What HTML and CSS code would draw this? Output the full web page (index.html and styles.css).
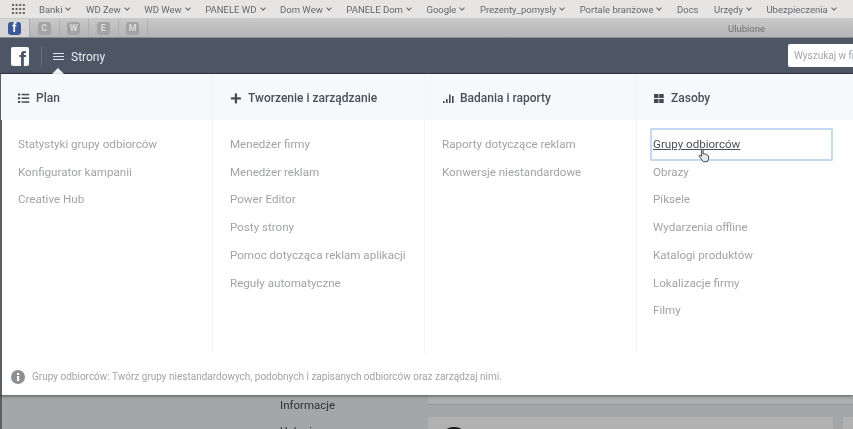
FILE: index.html
```html
<!DOCTYPE html>
<html lang="en">
<head>
  <meta charset="UTF-8" />
  <title>Grupy odbiorców</title>
  <link rel="stylesheet" href="styles.css">
</head>
<body>

  <!-- Browser bookmarks -->
  <div class="bookmarks">
    <svg class="apps" width="13" height="10" viewBox="0 0 13 10" fill="#666">
      <rect x="0" y="0" width="2" height="2"/><rect x="3.6" y="0" width="2" height="2"/><rect x="7.2" y="0" width="2" height="2"/><rect x="10.8" y="0" width="2" height="2"/>
      <rect x="0" y="4" width="2" height="2"/><rect x="3.6" y="4" width="2" height="2"/><rect x="7.2" y="4" width="2" height="2"/><rect x="10.8" y="4" width="2" height="2"/>
      <rect x="0" y="8" width="2" height="2"/><rect x="3.6" y="8" width="2" height="2"/><rect x="7.2" y="8" width="2" height="2"/><rect x="10.8" y="8" width="2" height="2"/>
    </svg>
    <span class="mark">Banki <i></i></span>
    <span class="mark">WD Zew <i></i></span>
    <span class="mark">WD Wew <i></i></span>
    <span class="mark">PANELE WD <i></i></span>
    <span class="mark">Dom Wew <i></i></span>
    <span class="mark">PANELE Dom <i></i></span>
    <span class="mark">Google <i></i></span>
    <span class="mark">Prezenty_pomysly <i></i></span>
    <span class="mark">Portale branżowe <i></i></span>
    <span class="mark">Docs</span>
    <span class="mark">Urzędy <i></i></span>
    <span class="mark">Ubezpieczenia <i></i></span>
  </div>

  <!-- Favourites tabs -->
  <div class="favs">
    <span class="fav fav-fb"><b class="tile tile-fb">f</b></span>
    <span class="fav"><b class="tile">C</b></span>
    <span class="fav"><b class="tile">W</b></span>
    <span class="fav"><b class="tile">E</b></span>
    <span class="fav"><b class="tile">M</b></span>
    <span class="favs-title">Ulubione</span>
  </div>

  <!-- Facebook bar -->
  <div class="nav">
    <span class="logo">f</span>
    <span class="nav-sep"></span>
    <span class="burger"><i></i><i></i><i></i></span>
    <span class="nav-label">Strony</span>
    <span class="search">Wyszukaj w fi</span>
    <span class="tail"></span>
  </div>

  <!-- Menu -->
  <div class="menu">
    <div class="menu-cols">
      <div class="col">
        <div class="col-head">
          <svg width="13" height="11" viewBox="0 0 13 11" fill="#444b55"><rect x="0" y="0.5" width="2.2" height="2"/><rect x="0" y="4.2" width="2.2" height="2"/><rect x="0" y="8" width="2.2" height="2"/><rect x="3.6" y="0.8" width="7.6" height="1.5"/><rect x="3.6" y="4.5" width="7.6" height="1.5"/><rect x="3.6" y="8.300" width="7.6" height="1.5"/></svg>
          Plan
        </div>
        <ul class="col-list">
          <li><a>Statystyki grupy odbiorców</a></li>
          <li><a>Konfigurator kampanii</a></li>
          <li><a>Creative Hub</a></li>
        </ul>
      </div>
      <div class="col">
        <div class="col-head">
          <svg width="13" height="11" viewBox="0 0 13 11" fill="#444b55"><rect x="0.9" y="4.300" width="10" height="2.2"/><rect x="4.800" y="0.4" width="2.2" height="10"/></svg>
          Tworzenie i zarządzanie
        </div>
        <ul class="col-list">
          <li><a>Menedżer firmy</a></li>
          <li><a>Menedżer reklam</a></li>
          <li><a>Power Editor</a></li>
          <li><a>Posty strony</a></li>
          <li><a>Pomoc dotycząca reklam aplikacji</a></li>
          <li><a>Reguły automatyczne</a></li>
        </ul>
      </div>
      <div class="col">
        <div class="col-head">
          <svg width="13" height="11" viewBox="0 0 13 11" fill="#444b55"><rect x="1" y="8" width="1.6" height="2"/><rect x="4" y="6" width="1.6" height="4"/><rect x="7" y="1.500" width="1.6" height="8.5"/><rect x="10" y="3" width="1.6" height="7"/></svg>
          Badania i raporty
        </div>
        <ul class="col-list">
          <li><a>Raporty dotyczące reklam</a></li>
          <li><a>Konwersje niestandardowe</a></li>
        </ul>
      </div>
      <div class="col">
        <div class="col-head">
          <svg width="13" height="11" viewBox="0 0 13 11" fill="#444b55"><rect x="1" y="1" width="4.5" height="4"/><rect x="6.200" y="1" width="4.5" height="4"/><rect x="1" y="6" width="4.5" height="4"/><rect x="6.200" y="6" width="4.5" height="4"/></svg>
          Zasoby
        </div>
        <ul class="col-list">
          <li class="active"><a>Grupy odbiorców</a>
            <svg class="cursor" width="13" height="15" viewBox="0 0 13 15"><path d="M3.500 1.200c.8-.6 1.600 0 1.600.8v4l1-.2 1.200.3 1.200.4 1.200.6c.8.5 1 1.200 1 2l-.3 2.400-1 2.200H5.300L2.800 10.500 1.200 8.300c-.4-.8.500-1.500 1.300-.9l.9 1V2z" fill="#e8e8e8" stroke="#444" stroke-width="1"/></svg>
          </li>
          <li><a>Obrazy</a></li>
          <li><a>Piksele</a></li>
          <li><a>Wydarzenia offline</a></li>
          <li><a>Katalogi produktów</a></li>
          <li><a>Lokalizacje firmy</a></li>
          <li><a>Filmy</a></li>
        </ul>
      </div>
    </div>
    <div class="menu-foot">
      <svg width="14" height="14" viewBox="0 0 14 14"><circle cx="7" cy="7" r="7" fill="#8d8f94"/><rect x="6" y="6" width="2.200" height="5" fill="#fff"/><rect x="6" y="3" width="2.200" height="2" fill="#fff"/></svg>
      Grupy odbiorców: Twórz grupy niestandardowych, podobnych i zapisanych odbiorców oraz zarządzaj nimi.
    </div>
  </div>

  <!-- Dimmed page under the menu -->
  <div class="page">
    <div class="side">
      <div>Informacje</div>
      <div>Usługi</div>
    </div>
    <div class="feed">
      <div class="strip"></div>
      <div class="cards">
        <div class="card"><span class="avatar"></span></div>
        <div class="card"></div>
      </div>
    </div>
  </div>

</body>
</html>
```
FILE: styles.css
```css
* {
  box-sizing: border-box;
  margin: 0;
  padding: 0;
}

html, body {
  height: 429px;
  overflow: hidden;
  font-family: "Roboto", "Liberation Sans", sans-serif;
  background: #a5a6a8;
}

body {
  filter: blur(0.35px);
}

.bookmarks {
  height: 19px;
  display: flex;
  align-items: center;
  padding-left: 12px;
  background: #e6e5e4;
  border-bottom: 1px solid #c9c8c7;
  font-size: 9.5px;
  color: #62676d;
  white-space: nowrap;
  overflow: hidden;
}

.apps {
  margin-right: 14px;
}

.mark {
  margin-right: 15.5px;
  display: flex;
  align-items: center;
}

.mark i {
  width: 4px;
  height: 4px;
  margin: -2px 0 0 4px;
  border-right: 1px solid #62676d;
  border-bottom: 1px solid #62676d;
  transform: rotate(45deg);
}

.favs {
  height: 19px;
  display: flex;
  align-items: center;
  position: relative;
  background: linear-gradient(#c8c8c8, #b5b5b5);
  border-bottom: 1px solid #8a8a8a;
}

.fav {
  width: 29.5px;
  height: 18px;
  display: flex;
  align-items: center;
  justify-content: center;
  border-right: 1px solid #adadad;
}

.fav-fb {
  background: #d6d6d6;
  width: 30px;
}

.tile {
  width: 13px;
  height: 13px;
  border-radius: 3px;
  background: #a3a3a3;
  color: #dcdcdc;
  font-size: 9px;
  line-height: 13px;
  text-align: center;
}

.tile-fb {
  background: #3b5998;
  color: #fff;
  font-size: 12px;
}

.favs-title {
  position: absolute;
  left: 728px;
  top: 4px;
  font-size: 9.5px;
  color: #707070;
}

.nav {
  height: 36px;
  display: flex;
  align-items: center;
  position: relative;
  padding: 2px 0 0 11px;
  background: #4c5664;
  border-bottom: 1px solid #33383f;
  color: #e8eaed;
}

.logo {
  width: 18px;
  height: 19px;
  padding: 2px 3px 0 0;
  border-radius: 2px;
  background: #fff;
  color: #4c5664;
  font: bold 21px/19px "Liberation Sans", sans-serif;
  text-align: right;
}

.nav-sep {
  width: 1px;
  height: 20px;
  margin: 0 11px 0 12px;
  background: #666f7c;
}

.burger {
  width: 11px;
  display: flex;
  flex-direction: column;
  gap: 2px;
  margin-right: 7px;
}

.burger i {
  height: 1px;
  background: #dfe2e6;
}

.nav-label {
  font-size: 12px;
}

.search {
  position: absolute;
  left: 788px;
  top: 6px;
  width: 65px;
  height: 23px;
  padding-left: 6px;
  background: #fff;
  border-radius: 2px 0 0 2px;
  color: #a2a6ab;
  font-size: 10px;
  line-height: 23px;
  white-space: nowrap;
}

.tail {
  position: absolute;
  left: 52px;
  bottom: -1px;
  border: 6px solid transparent;
  border-top: 0;
  border-bottom-color: #f6f9fb;
}

.menu {
  height: 321px;
  display: flex;
  flex-direction: column;
  background: #fff;
  border-left: 2px solid #5c5f64;
  box-shadow: 0 1px 3px rgba(0, 0, 0, 0.5);
  position: relative;
}

.menu-cols {
  height: 281px;
  margin-left: -1px;
  display: grid;
  grid-template-columns: repeat(3, 212px) 1fr;
}

.col {
  border-right: 1px solid #f3f4f5;
}

.col:last-child {
  border-right: 0;
}

.col-head {
  height: 46px;
  display: flex;
  align-items: center;
  gap: 5px;
  padding: 2px 0 0 17px;
  background: #f6f9fb;
  color: #4b5058;
  font-size: 12px;
  font-weight: 500;
}

.col-list {
  list-style: none;
  padding: 11px 3px 0 17px;
  font-size: 11.6px;
  line-height: 27.7px;
  color: #a1a3a7;
}

.col:last-child .col-head,
.col:last-child .col-list {
  padding-left: 16px;
}

.active {
  position: relative;
  width: 183px;
  margin: -2.65px 0 -2.65px -3px;
  padding-left: 1px;
  border: 2px solid #c5d9f3;
  border-radius: 1px;
  line-height: 29px;
  color: #4b5058;
}

.active a {
  text-decoration: underline;
}

.cursor {
  position: absolute;
  left: 46px;
  top: 18px;
}

.menu-foot {
  flex: 1;
  display: flex;
  align-items: center;
  gap: 7px;
  padding: 3px 0 0 9px;
  color: #a1a3a7;
  font-size: 10px;
}

.page {
  display: flex;
  height: 34px;
  overflow: hidden;
  padding-left: 278px;
  border-left: 2px solid #5c5f64;
  font-size: 11.5px;
  color: #2f3136;
}

.side {
  flex: none;
  width: 148px;
  line-height: 21px;
}

.side div + div {
  margin-top: 5px;
}

.feed {
  flex: none;
  width: 425px;
}

.strip {
  height: 10px;
  background: #adaeb0;
  border-bottom: 1px solid #999;
  width: 430px;
}

.cards {
  display: flex;
  gap: 10px;
  margin-top: 12px;
}

.card {
  flex: none;
  width: 405px;
  height: 40px;
  padding: 10px 0 0 11px;
  background: #b1b1b2;
}

.avatar {
  display: block;
  width: 30px;
  height: 30px;
  border-radius: 50%;
  background: #111;
}
```
